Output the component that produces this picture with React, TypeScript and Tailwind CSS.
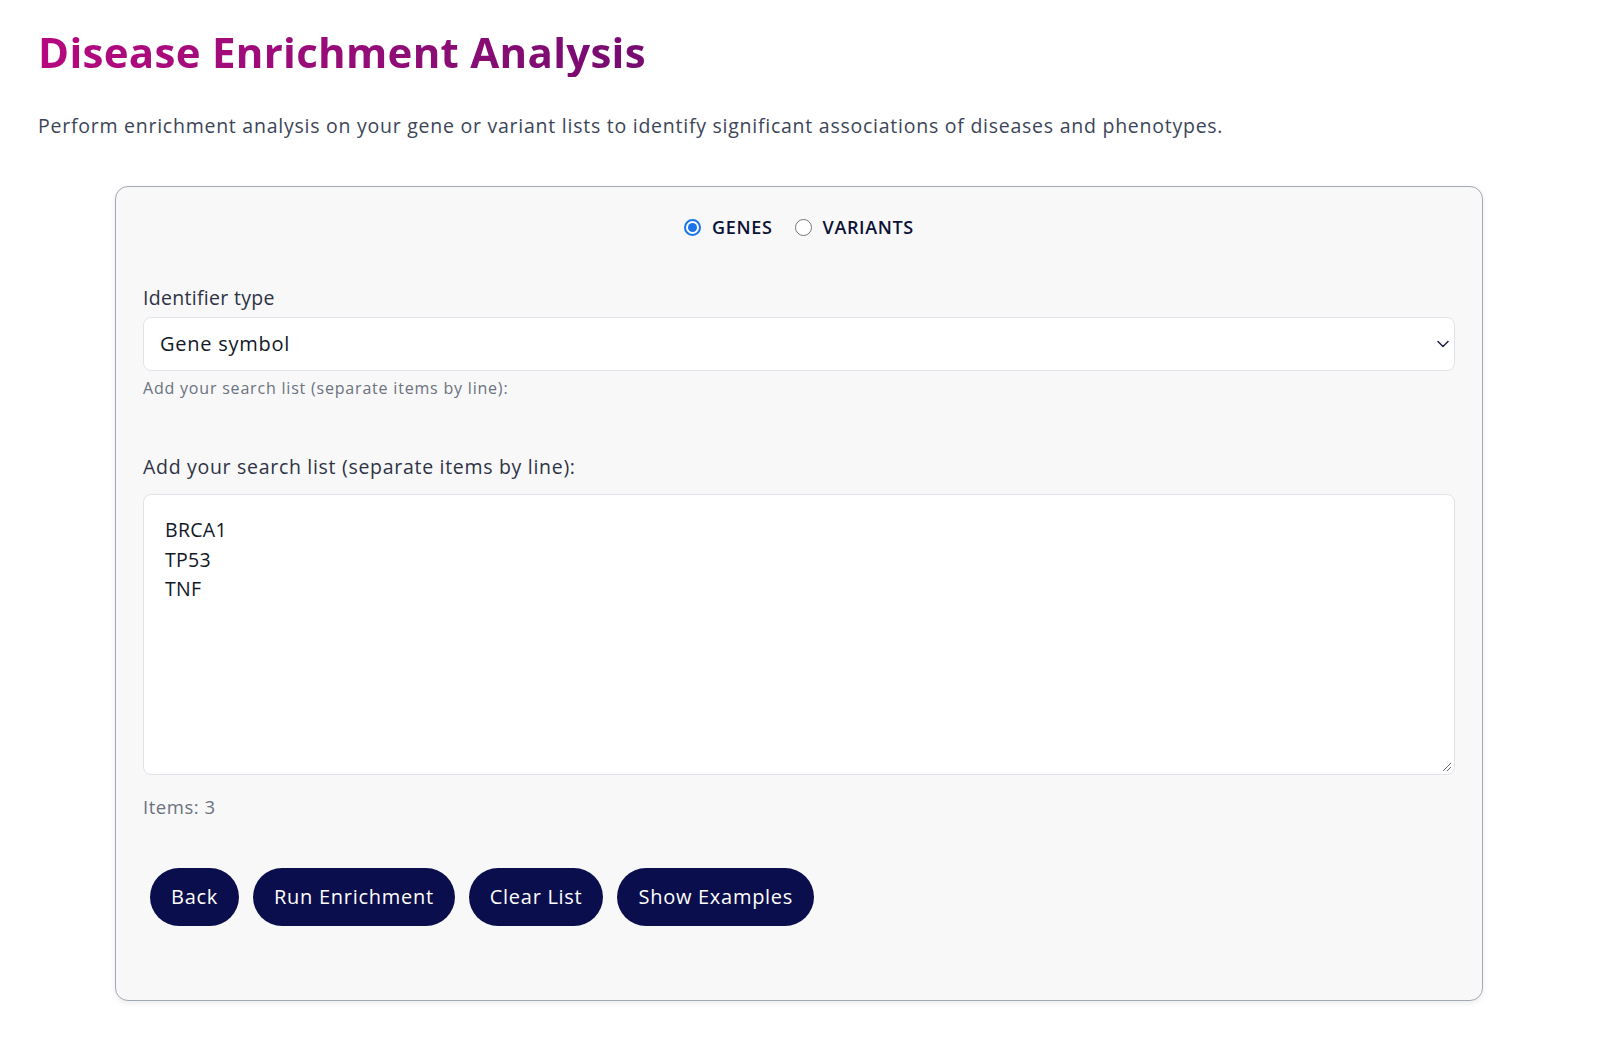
import React from "react";

const font = { fontFamily: '"Open Sans", "Noto Sans", sans-serif' };

function Chevron() {
  return (
    <svg width="12" height="12" viewBox="0 0 12 12" fill="none" stroke="#1f2340" strokeWidth="1.5" strokeLinecap="round" strokeLinejoin="round">
      <path d="M1 3.5l5 5 5-5" />
    </svg>
  );
}

export default function App() {
  return (
    <div className="min-h-[1050px] w-[1600px] bg-white font-['Open_Sans',_'Noto_Sans',_sans-serif]" style={font}>
      <div className="px-[38px] pt-[27px]">
        <h1 className="text-[42px] leading-[50px] font-bold bg-gradient-to-r from-[#b6077f] to-[#760b70] bg-clip-text text-transparent w-fit tracking-[0.3px]">
          Disease Enrichment Analysis
        </h1>
        <p className="mt-[35px] text-[19.5px] leading-[28px] text-[#3c4557] tracking-[0.75px]">
          Perform enrichment analysis on your gene or variant lists to identify significant associations of diseases and phenotypes.
        </p>
      </div>

      <div className="mt-[46px] ml-[115px] w-[1368px] h-[815px] rounded-[13px] border border-[#a3a8b5] bg-[#f8f8f9] shadow-[0_2px_6px_rgba(0,0,0,0.08)] px-[27px] pt-[28px]">
        <div className="flex items-center justify-center gap-[22px] h-[24px]">
          <label className="flex items-center gap-[11px]">
            <span className="w-[17px] h-[17px] rounded-full border-[2px] border-[#1a73e8] flex items-center justify-center bg-white">
              <span className="w-[9px] h-[9px] rounded-full bg-[#1a73e8]" />
            </span>
            <span className="text-[18px] font-semibold text-[#0b1236] tracking-[0.65px]">GENES</span>
          </label>
          <label className="flex items-center gap-[11px]">
            <span className="w-[17px] h-[17px] rounded-full border border-[#767676] bg-white" />
            <span className="text-[18px] font-semibold text-[#0b1236] tracking-[0.65px]">VARIANTS</span>
          </label>
        </div>

        <div className="mt-[46px] text-[19.5px] font-medium text-[#2d3344] leading-[26px] tracking-[0.3px]">Identifier type</div>
        <div className="mt-[6px] h-[54px] rounded-[8px] border border-[#e0e3ea] bg-white flex items-center justify-between pl-[16px] pr-[5px]">
          <span className="text-[20px] text-[#111827] tracking-[0.75px]">Gene symbol</span>
          <Chevron />
        </div>
        <div className="mt-[6px] text-[16px] text-[#6b7280] leading-[22px] tracking-[0.8px]">Add your search list (separate items by line):</div>

        <div className="mt-[55px] text-[19.5px] font-medium text-[#2d3344] leading-[26px] tracking-[0.7px]">Add your search list (separate items by line):</div>
        <div className="relative mt-[14px] h-[281px] rounded-[8px] border border-[#e0e3ea] bg-white pl-[21px] pt-[20px]">
          <div className="text-[19.5px] leading-[29.5px] text-[#111827] tracking-[0.3px]">
            <div>BRCA1</div>
            <div>TP53</div>
            <div>TNF</div>
          </div>
          <svg className="absolute right-[2px] bottom-[2px]" width="10" height="10" viewBox="0 0 10 10" stroke="#6b6b6b" strokeWidth="1">
            <path d="M1 9L9 1M5 9L9 5" />
          </svg>
        </div>
        <div className="mt-[19px] text-[18.5px] text-[#6b7280] leading-[26px] tracking-[0.55px]">Items: 3</div>

        <div className="mt-[48px] ml-[7px] flex gap-[14px]">
          {["Back", "Run Enrichment", "Clear List", "Show Examples"].map((t) => (
            <button key={t} className="h-[58px] px-[21px] rounded-full bg-[#0a0e4c] text-white text-[20px] font-medium tracking-[0.72px]">
              {t}
            </button>
          ))}
        </div>
      </div>
    </div>
  );
}
